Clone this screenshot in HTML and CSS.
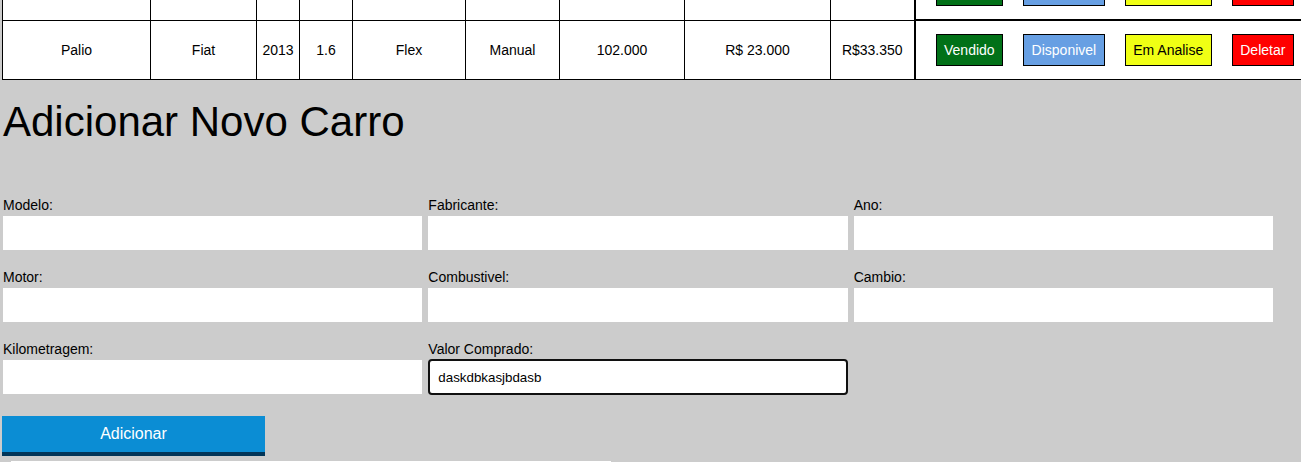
FILE: index.html
```html
<!DOCTYPE html>
<html lang="pt-BR">
<head>
<meta charset="utf-8">
<title>Carros</title>
<link rel="stylesheet" href="styles.css">
</head>
<body>
<div class="page">
  <table class="cars">
    <colgroup>
      <col class="c1"><col class="c2"><col class="c3"><col class="c4"><col class="c5">
      <col class="c6"><col class="c7"><col class="c8"><col class="c9"><col class="c10">
    </colgroup>
    <tbody>
      <tr>
        <td>Gol</td><td>Volkswagen</td><td>2015</td><td>1.0</td><td>Flex</td>
        <td>Manual</td><td>85.000</td><td>R$ 19.000</td><td>R$27.500</td>
        <td class="actions">
          <div class="btns">
            <button class="act sold">Vendido</button>
            <button class="act avail">Disponivel</button>
            <button class="act review">Em Analise</button>
            <button class="act del">Deletar</button>
          </div>
        </td>
      </tr>
      <tr>
        <td>Palio</td><td>Fiat</td><td>2013</td><td>1.6</td><td>Flex</td>
        <td>Manual</td><td>102.000</td><td>R$ 23.000</td><td>R$33.350</td>
        <td class="actions">
          <div class="btns">
            <button class="act sold">Vendido</button>
            <button class="act avail">Disponivel</button>
            <button class="act review">Em Analise</button>
            <button class="act del">Deletar</button>
          </div>
        </td>
      </tr>
    </tbody>
  </table>

  <h1 class="title">Adicionar Novo Carro</h1>

  <form class="car-form">
    <div class="fields">
      <div class="field"><label class="lbl">Modelo:</label><input class="inp" type="text"></div>
      <div class="field"><label class="lbl">Fabricante:</label><input class="inp" type="text"></div>
      <div class="field"><label class="lbl">Ano:</label><input class="inp" type="text"></div>
      <div class="field"><label class="lbl">Motor:</label><input class="inp" type="text"></div>
      <div class="field"><label class="lbl">Combustivel:</label><input class="inp" type="text"></div>
      <div class="field"><label class="lbl">Cambio:</label><input class="inp" type="text"></div>
      <div class="field"><label class="lbl">Kilometragem:</label><input class="inp" type="text"></div>
      <div class="field"><label class="lbl">Valor Comprado:</label><input class="inp focused" type="text" value="daskdbkasjbdasb"></div>
    </div>
    <button class="add" type="button">Adicionar</button>
  </form>

  <div class="next-block"></div>
</div>
</body>
</html>
```

FILE: styles.css
```css
html, body {
  margin: 0;
  padding: 0;
  overflow: hidden;
  background: #cccccc;
}

body {
  font-family: "Liberation Sans", Arial, sans-serif;
  color: #000;
}

.page {
  width: 1301px;
  height: 462px;
  overflow: hidden;
}

.cars {
  border-collapse: collapse;
  table-layout: fixed;
  width: 1312px;
  margin: -41px 0 0 2px;
  background: #fff;
}

.c1 { width: 148px; }
.c2 { width: 106px; }
.c3 { width: 43px; }
.c4 { width: 53px; }
.c5 { width: 113px; }
.c6 { width: 94px; }
.c7 { width: 125px; }
.c8 { width: 146px; }
.c9 { width: 84px; }
.c10 { width: 400px; }

.cars td {
  border: 1px solid #000;
  height: 58px;
  padding: 0;
  text-align: center;
  vertical-align: middle;
  font-size: 14px;
  white-space: nowrap;
}

.cars td.actions {
  border-left: 2px solid #000;
  border-top: 2px solid #000;
  text-align: left;
}

.btns {
  display: flex;
  align-items: center;
  gap: 20px;
  padding-left: 20px;
}

.act {
  font-family: "Liberation Sans", Arial, sans-serif;
  font-size: 14px;
  height: 32px;
  padding: 0 7.5px;
  border: 1px solid #000;
  border-radius: 0;
  margin: 0;
  color: #fff;
}

.sold { background: #017118; }
.avail { background: #679fe3; }
.review { background: #f0ff14; color: #000; }
.del { background: #ff0000; }

.title {
  font-size: 42px;
  font-weight: normal;
  margin: 18px 0 0 3px;
  line-height: 48px;
}

.car-form {
  margin: 51px 0 0 0;
}

.fields {
  display: grid;
  grid-template-columns: repeat(3, 419.33px);
  column-gap: 6px;
  row-gap: 19px;
  padding-left: 3px;
}

.field {
  display: flex;
  flex-direction: column;
}

.lbl {
  font-size: 14px;
  line-height: 16px;
  margin-bottom: 3px;
  color: #000;
}

.inp {
  box-sizing: border-box;
  height: 34px;
  width: 100%;
  border: none;
  background: #fff;
  margin: 0;
  padding: 0 10px;
  font-family: "Liberation Sans", Arial, sans-serif;
  font-size: 13.33px;
  color: #000;
}

.inp.focused {
  border: 2px solid #101010;
  border-radius: 4px;
  padding: 1px 8px 0;
  height: 36px;
  margin-top: -1px;
  margin-bottom: -1px;
  outline: none;
}

.add {
  display: block;
  box-sizing: border-box;
  margin: 22px 0 0 2px;
  width: 263px;
  height: 40px;
  border: none;
  border-bottom: 4px solid #023558;
  background: #0b8dd4;
  color: #fff;
  font-family: "Liberation Sans", Arial, sans-serif;
  font-size: 16px;
  padding: 0;
}

.next-block {
  margin: 5px 0 0 11px;
  width: 600px;
  height: 40px;
  background: #fff;
}
```
